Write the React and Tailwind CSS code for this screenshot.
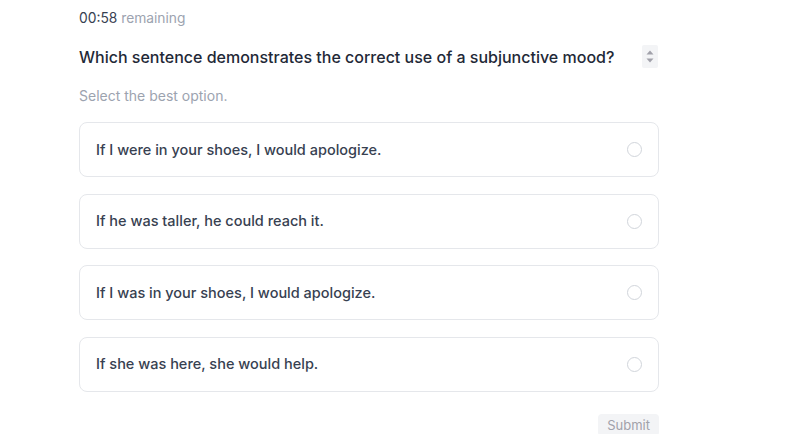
import React from "react";

const options = [
  "If I were in your shoes, I would apologize.",
  "If he was taller, he could reach it.",
  "If I was in your shoes, I would apologize.",
  "If she was here, she would help.",
];

export default function App() {
  return (
    <div className="min-h-screen bg-white" style={{ fontFamily: "Inter, 'Noto Sans', sans-serif" }}>
      <div className="ml-[79px] w-[580px] pt-[8px] flex flex-col">
        <div className="text-[13.8px] leading-5 text-[#374151]">
          00:58 <span className="text-[#9ca3af]">remaining</span>
        </div>
        <div className="mt-[17px] h-[23px] flex items-center justify-between">
          <div className="text-[16px] leading-6 font-medium text-[#1f2937]">
            Which sentence demonstrates the correct use of a subjunctive mood?
          </div>
          <div className="mr-[1px] w-[16px] h-[23px] rounded-[2px] bg-[#f3f4f6] flex flex-col items-center justify-center gap-[3px]">
            <svg width="8" height="5" viewBox="0 0 8 5"><path d="M4 0.5L7.5 4.5H0.5Z" fill="#a1a1aa" /></svg>
            <svg width="8" height="5" viewBox="0 0 8 5"><path d="M4 4.5L7.5 0.5H0.5Z" fill="#a1a1aa" /></svg>
          </div>
        </div>
        <div className="mt-[18px] text-[14px] leading-5 text-[#9ca3af]">Select the best option.</div>
        <div className="mt-[16px] flex flex-col gap-[16.6px]">
          {options.map((o) => (
            <div
              key={o}
              className="h-[55px] rounded-lg border border-[#e5e7eb] bg-white flex items-center justify-between pl-4 pr-4"
            >
              <span className="text-[14.5px] font-medium text-[#374151]">{o}</span>
              <span className="w-[15px] h-[15px] rounded-full border-[1.5px] border-[#d1d5db] bg-white" />
            </div>
          ))}
        </div>
        <div className="mt-[22px] flex justify-end">
          <button className="h-[22px] px-[9px] rounded-[4px] bg-[#f3f4f6] text-[13px] leading-5 text-[#a1a1aa]">Submit</button>
        </div>
      </div>
    </div>
  );
}
